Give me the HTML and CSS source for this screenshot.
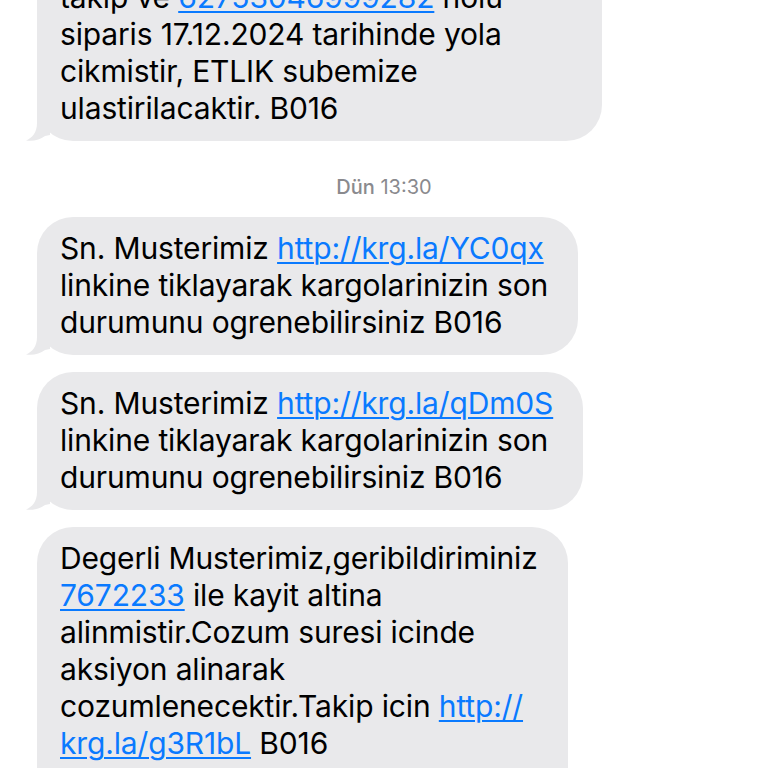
FILE: index.html
```html
<!DOCTYPE html>
<html lang="tr">
<head>
<meta charset="utf-8">
<title>Mesajlar</title>
<link rel="stylesheet" href="styles.css">
</head>
<body>
<div class="thread">
  <div class="msg">
    <div class="bubble bubble-first">
      <span class="line">takip ve <a href="#" class="link">62753046999282</a> nolu</span>
      <span class="line">siparis 17.12.2024 tarihinde yola</span>
      <span class="line">cikmistir, ETLIK subemize</span>
      <span class="line">ulastirilacaktir. B016</span>
      <svg class="tail" viewBox="0 0 24 36" width="24" height="36"><path d="M11 0 L11 18 C11 28 6 33 0 35.5 C7 36.5 14 35 19 31 L24 30 L24 0 Z"/></svg>
    </div>
  </div>

  <div class="stamp"><span class="stamp-day">Dün</span> 13:30</div>

  <div class="msg">
    <div class="bubble">
      <span class="line">Sn. Musterimiz <a href="#" class="link">http://krg.la/YC0qx</a></span>
      <span class="line">linkine tiklayarak kargolarinizin son</span>
      <span class="line">durumunu ogrenebilirsiniz B016</span>
      <svg class="tail" viewBox="0 0 24 36" width="24" height="36"><path d="M11 0 L11 18 C11 28 6 33 0 35.5 C7 36.5 14 35 19 31 L24 30 L24 0 Z"/></svg>
    </div>
  </div>

  <div class="msg">
    <div class="bubble">
      <span class="line">Sn. Musterimiz <a href="#" class="link">http://krg.la/qDm0S</a></span>
      <span class="line">linkine tiklayarak kargolarinizin son</span>
      <span class="line">durumunu ogrenebilirsiniz B016</span>
      <svg class="tail" viewBox="0 0 24 36" width="24" height="36"><path d="M11 0 L11 18 C11 28 6 33 0 35.5 C7 36.5 14 35 19 31 L24 30 L24 0 Z"/></svg>
    </div>
  </div>

  <div class="msg">
    <div class="bubble">
      <span class="line">Degerli Musterimiz,geribildiriminiz</span>
      <span class="line"><a href="#" class="link">7672233</a> ile kayit altina</span>
      <span class="line">alinmistir.Cozum suresi icinde</span>
      <span class="line">aksiyon alinarak</span>
      <span class="line">cozumlenecektir.Takip icin <a href="#" class="link">http://</a></span>
      <span class="line"><a href="#" class="link">krg.la/g3R1bL</a> B016</span>
      <span class="line">&nbsp;</span>
    </div>
  </div>
</div>
</body>
</html>
```

FILE: styles.css
```css
html, body {
  margin: 0;
  padding: 0;
  background: #ffffff;
  overflow: hidden;
}

body {
  width: 768px;
  height: 768px;
  font-family: Inter, "Noto Sans", "Liberation Sans", sans-serif;
  color: #000000;
}

.thread {
  display: flex;
  flex-direction: column;
  padding-left: 37px;
}

.msg {
  display: flex;
  justify-content: flex-start;
  margin-bottom: 17px;
}

.bubble {
  position: relative;
  display: flex;
  flex-direction: column;
  background: #e9e9eb;
  border-radius: 36px;
  padding: 13px 30px 14px 23px;
  font-size: 30px;
  line-height: 37px;
  letter-spacing: -0.15px;
  white-space: nowrap;
}

.bubble-first {
  width: 565px;
  box-sizing: border-box;
  margin-top: -81px;
  padding-top: 60px;
  border-top-left-radius: 0;
  border-top-right-radius: 0;
}

.line {
  display: block;
}

.link {
  color: #0a7aff;
  text-decoration: underline;
  text-decoration-thickness: 1.5px;
  text-underline-offset: 3px;
}

.tail {
  position: absolute;
  left: -11px;
  bottom: 0;
  fill: #e9e9eb;
}

.stamp {
  align-self: center;
  margin-left: -37px;
  margin-top: 18px;
  margin-bottom: 19px;
  font-size: 20px;
  line-height: 22px;
  color: #8a8a8e;
}

.stamp-day {
  font-weight: 500;
}
```
